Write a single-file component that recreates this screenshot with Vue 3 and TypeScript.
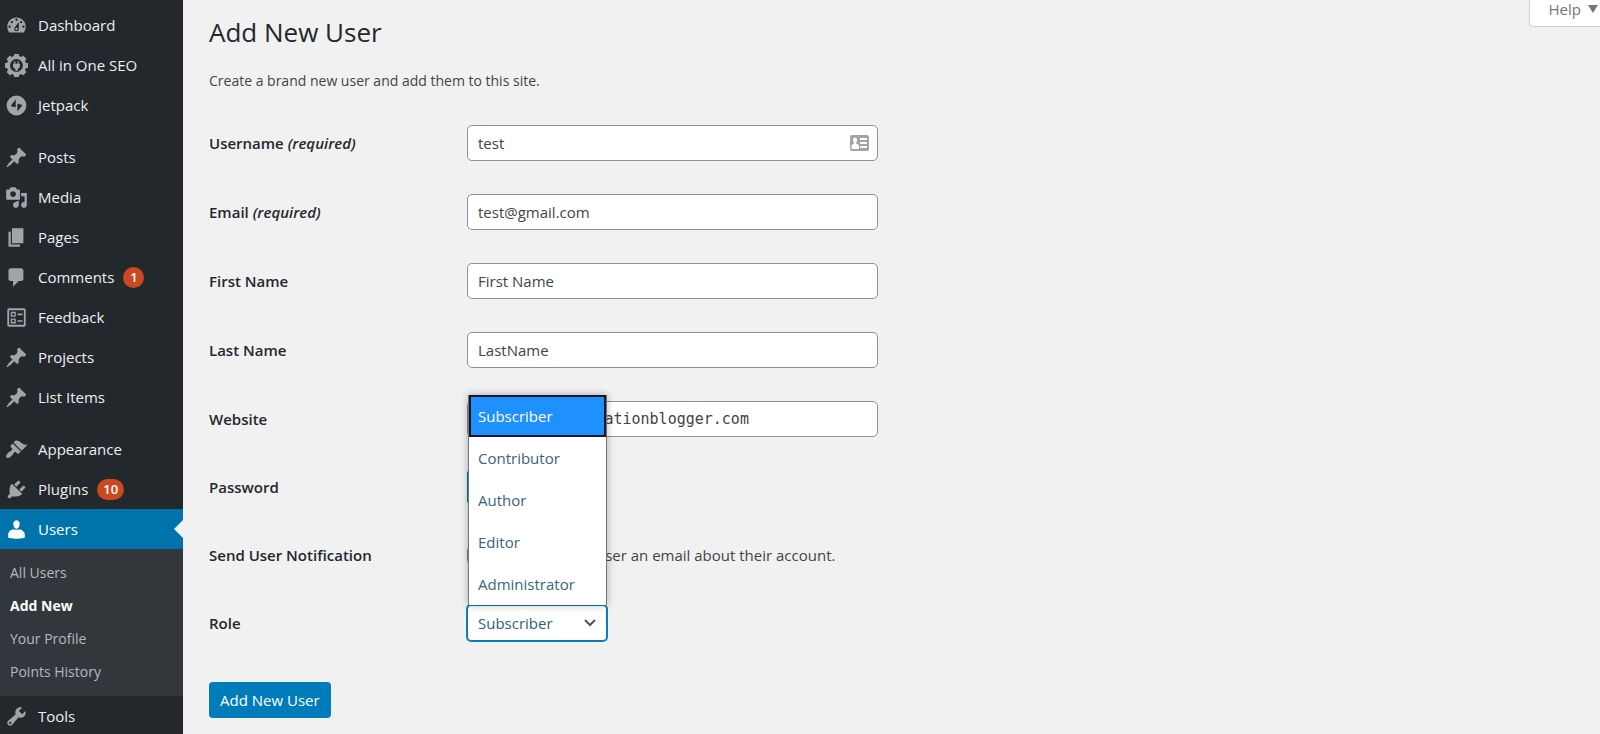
<script setup lang="ts">
import { ref } from 'vue'

interface MenuItem {
  label: string
  icon: string
  badge?: number
  current?: boolean
  children?: string[]
}

interface Field {
  id: string
  label: string
  type: string
  required?: boolean
  mono?: boolean
}

const pin =
  'M10.44 3.02l1.82-1.82 6.36 6.35-1.83 1.82c-1.05-.68-2.48-.57-3.41.36l-.75.75c-.92.93-1.04 2.35-.35 3.41l-1.83 1.82-2.41-2.41-2.8 2.79c-.42.42-3.38 2.71-3.8 2.29s1.86-3.39 2.28-3.81l2.79-2.79L4.1 9.36l1.83-1.82c1.05.69 2.48.57 3.4-.36l.75-.75c.93-.92 1.05-2.35.36-3.41z'

/* Outline of an eight-toothed gear centred on 10,10 with a round hole. */
function gearPath(): string {
  const points: string[] = []
  for (let i = 0; i < 8; i++) {
    const base = (i * Math.PI) / 4
    const corners: [number, number][] = [
      [8.5, -0.27],
      [10.4, -0.2],
      [10.4, 0.2],
      [8.5, 0.27],
    ]
    for (const [r, offset] of corners) {
      const x = 10 + r * Math.cos(base + offset)
      const y = 10 + r * Math.sin(base + offset)
      points.push(`${x.toFixed(2)} ${y.toFixed(2)}`)
    }
  }
  return `M${points.join('L')}zM10 4.4a5.6 5.6 0 1 0 0 11.2a5.6 5.6 0 1 0 0-11.2z`
}

const icons: Record<string, string> = {
  dashboard:
    'M3.76 16h12.48c1.1-1.37 1.76-3.11 1.76-5 0-4.42-3.58-8-8-8s-8 3.58-8 8c0 1.89.66 3.63 1.76 5zM10 4c.55 0 1 .45 1 1s-.45 1-1 1-1-.45-1-1 .45-1 1-1zM6 6c.55 0 1 .45 1 1s-.45 1-1 1-1-.45-1-1 .45-1 1-1zm8 0c.55 0 1 .45 1 1s-.45 1-1 1-1-.45-1-1 .45-1 1-1zm-5.37 5.55L12 7v6c0 1.1-.9 2-2 2s-2-.9-2-2c0-.57.24-1.08.63-1.45zM4 10c.55 0 1 .45 1 1s-.45 1-1 1-1-.45-1-1 .45-1 1-1zm12 0c.55 0 1 .45 1 1s-.45 1-1 1-1-.45-1-1 .45-1 1-1zm-5 3c0-.55-.45-1-1-1s-1 .45-1 1 .45 1 1 1 1-.45 1-1z',
  seo: gearPath() + 'M8 6.2h1v2.2h2V6.2h1v2.2h1v2.2c0 1.2-.9 2-2 2.1v2.1H9v-2.1c-1.1-.1-2-.9-2-2.1V8.4h1z',
  jetpack:
    'M10 1.4a8.6 8.6 0 1 0 0 17.2a8.6 8.6 0 1 0 0-17.2zM9.3 4.8v6.8L5.5 10.7c-.3-.1-.4-.4-.3-.7zM10.8 8.4l3.8.9c.3.1.4.4.3.7l-4.1 5.3z',
  pin,
  media:
    'M13 11V4c0-.55-.45-1-1-1h-1.67L9 1H5L3.67 3H2c-.55 0-1 .45-1 1v7c0 .55.45 1 1 1h10c.55 0 1-.45 1-1zM7 4.5c1.38 0 2.5 1.12 2.5 2.5S8.38 9.5 7 9.5 4.5 8.38 4.5 7 5.62 4.5 7 4.5zM14 6h5v10.5c0 1.38-1.12 2.5-2.5 2.5S14 17.88 14 16.5s1.12-2.5 2.5-2.5c.17 0 .34.02.5.05V9h-3V6zm-4 8.05V13h2v3.5c0 1.38-1.12 2.5-2.5 2.5S7 17.88 7 16.5 8.12 14 9.5 14c.17 0 .34.02.5.05z',
  pages: 'M6 15V2h10v13H6zm-1 1h8v2H3V5h2v11z',
  comments: 'M5 2h9c1.1 0 2 .9 2 2v7c0 1.1-.9 2-2 2h-2l-5 5v-5H5c-1.1 0-2-.9-2-2V4c0-1.1.9-2 2-2z',
  feedback:
    'M3.5 2h13c.8 0 1.5.7 1.5 1.5v13c0 .8-.7 1.5-1.5 1.5h-13c-.8 0-1.5-.7-1.5-1.5v-13C2 2.7 2.7 2 3.5 2zM3.6 3.6v12.8h12.8V3.6zM5 5h4.4v4.4H5zM6.2 6.2v2h2v-2zM5 10.8h4.4v4.4H5zM6.2 12v2h2v-2zM10.8 6.5h4.4v1.5h-4.4zM10.8 12.3h4.4v1.5h-4.4z',
  appearance:
    'M14.48 11.06L7.41 3.99l1.5-1.5c.5-.56 2.3-.47 3.51.32 1.21.8 1.43 1.28 2.91 2.1 1.18.64 2.45 1.26 4.45.85zm-.71.71L6.7 4.7 4.93 6.47c-.39.39-.39 1.02 0 1.41l1.06 1.06c.39.39.39 1.03 0 1.42-.6.6-1.43 1.11-2.21 1.69-.35.26-.7.53-1.01.84C1.43 14.23.4 16.08 1.4 17.07c.99 1 2.84-.03 4.18-1.36.31-.31.58-.66.85-1.02.57-.78 1.08-1.61 1.69-2.21.39-.39 1.02-.39 1.41 0l1.06 1.06c.39.39 1.02.39 1.41 0z',
  plugins:
    'M13.11 4.36L9.87 7.6 8 5.73l3.24-3.24c.35-.34 1.05-.2 1.56.32.52.51.66 1.21.31 1.55zm-8 1.77l.91-1.12 9.01 9.01-1.19.84c-.71.71-2.63 1.16-3.82 1.16H6.14L4.9 17.26c-.59.59-1.54.59-2.12 0-.59-.58-.59-1.53 0-2.12l1.24-1.24v-3.88c0-1.13.4-3.19 1.09-3.89zm7.26 3.97l3.24-3.24c.34-.35 1.04-.21 1.55.31.52.51.66 1.21.31 1.55l-3.24 3.25z',
  users:
    'M10 9.25c-2.27 0-2.73-3.44-2.73-3.44C7 4.02 7.82 2 9.97 2c2.16 0 2.98 2.02 2.71 3.81 0 0-.41 3.44-2.68 3.44zM10 10.2L12.72 10c2.39 0 4.52 2.33 4.52 4.53v2.49s-3.65 1.13-7.24 1.13c-3.65 0-7.24-1.13-7.24-1.13v-2.49c0-2.25 1.94-4.48 4.47-4.48z',
  tools:
    'M16.68 9.77c-1.34 1.34-3.3 1.67-4.95.99l-5.41 6.52c-.99.99-2.59.99-3.58 0s-.99-2.59 0-3.57l6.52-5.42c-.68-1.65-.35-3.61.99-4.95 1.28-1.28 3.12-1.62 4.72-1.06l-2.89 2.89 2.82 2.82 2.86-2.87c.53 1.58.18 3.39-1.08 4.65zM3.81 16.21c.4.39 1.04.39 1.43 0 .4-.4.4-1.04 0-1.43-.39-.4-1.03-.4-1.43 0-.39.39-.39 1.03 0 1.43z',
}

const menuGroups: MenuItem[][] = [
  [
    { label: 'Dashboard', icon: 'dashboard' },
    { label: 'All in One SEO', icon: 'seo' },
    { label: 'Jetpack', icon: 'jetpack' },
  ],
  [
    { label: 'Posts', icon: 'pin' },
    { label: 'Media', icon: 'media' },
    { label: 'Pages', icon: 'pages' },
    { label: 'Comments', icon: 'comments', badge: 1 },
    { label: 'Feedback', icon: 'feedback' },
    { label: 'Projects', icon: 'pin' },
    { label: 'List Items', icon: 'pin' },
  ],
  [
    { label: 'Appearance', icon: 'appearance' },
    { label: 'Plugins', icon: 'plugins', badge: 10 },
    {
      label: 'Users',
      icon: 'users',
      current: true,
      children: ['All Users', 'Add New', 'Your Profile', 'Points History'],
    },
    { label: 'Tools', icon: 'tools' },
  ],
]

const currentChild = 'Add New'

const fields: Field[] = [
  { id: 'username', label: 'Username', type: 'text', required: true },
  { id: 'email', label: 'Email', type: 'email', required: true },
  { id: 'first-name', label: 'First Name', type: 'text' },
  { id: 'last-name', label: 'Last Name', type: 'text' },
  { id: 'website', label: 'Website', type: 'url', mono: true },
]

const values = ref<Record<string, string>>({
  username: 'test',
  email: 'test@gmail.com',
  'first-name': 'First Name',
  'last-name': 'LastName',
  website: 'https://informationblogger.com',
})

const roles = ['Subscriber', 'Contributor', 'Author', 'Editor', 'Administrator']
const role = ref('Subscriber')
const roleListOpen = ref(true)
const notify = ref(false)

function pickRole(name: string): void {
  role.value = name
  roleListOpen.value = false
}
</script>

<template>
  <div class="admin">
    <nav class="sidebar" aria-label="Main menu">
      <ul v-for="(group, g) in menuGroups" :key="g" class="menu-group">
        <li v-for="item in group" :key="item.label">
          <a href="#" class="menu-link" :class="{ current: item.current }">
            <svg class="menu-icon" viewBox="0 0 20 20" aria-hidden="true">
              <path :d="icons[item.icon]" fill-rule="evenodd" />
            </svg>
            <span>{{ item.label }}</span>
            <span v-if="item.badge" class="badge">{{ item.badge }}</span>
          </a>
          <ul v-if="item.children" class="submenu">
            <li v-for="child in item.children" :key="child">
              <a href="#" class="submenu-link" :class="{ active: child === currentChild }">{{ child }}</a>
            </li>
          </ul>
        </li>
      </ul>
    </nav>

    <main class="content">
      <header class="page-head">
        <h1>Add New User</h1>
        <button type="button" class="help">
          Help
          <svg viewBox="0 0 10 8" aria-hidden="true"><path d="M0 0h10L5 8z" /></svg>
        </button>
      </header>
      <p class="intro">Create a brand new user and add them to this site.</p>

      <form @submit.prevent>
        <div v-for="field in fields" :key="field.id" class="row">
          <label :for="field.id">{{ field.label }} <em v-if="field.required">(required)</em></label>
          <div class="control">
            <input
              :id="field.id"
              v-model="values[field.id]"
              :type="field.type"
              class="text-input"
              :class="{ mono: field.mono }"
            />
            <svg v-if="field.id === 'username'" class="card-icon" viewBox="0 0 19 16" aria-hidden="true">
              <rect width="19" height="16" rx="2" fill="#a3a3a3" />
              <path
                d="M5 2.5c1.3 0 2.1 1 2.1 2.4 0 1-.4 1.9-1 2.4v1.2l2 1c.5.3.8.8.8 1.5v3H1.5v-3c0-.7.3-1.2.8-1.5l1.7-1V7.3c-.6-.5-1-1.4-1-2.4 0-1.4.8-2.4 2-2.4zM10 3h7v2h-7zM10 7h7v2h-7zM10 11h7v2h-7z"
                fill="#fff"
              />
            </svg>
          </div>
        </div>

        <div class="row compact">
          <label for="show-password">Password</label>
          <div class="control">
            <button id="show-password" type="button" class="secondary">Show password</button>
          </div>
        </div>

        <div class="row compact">
          <span class="row-title">Send User Notification</span>
          <div class="control">
            <label class="check">
              <input v-model="notify" type="checkbox" />
              <span>Send the new user an email about their account.</span>
            </label>
          </div>
        </div>

        <div class="row compact">
          <label for="role">Role</label>
          <div class="control">
            <div class="role">
              <select id="role" v-model="role">
                <option v-for="name in roles" :key="name">{{ name }}</option>
              </select>
              <svg class="chevron" viewBox="0 0 12 8" aria-hidden="true">
                <path d="M1 1l5 5 5-5" fill="none" stroke="#555" stroke-width="2" />
              </svg>
              <ul v-if="roleListOpen" class="role-list" role="listbox" aria-label="Role">
                <li
                  v-for="name in roles"
                  :key="name"
                  role="option"
                  :aria-selected="name === role"
                  :class="{ selected: name === role }"
                  @click="pickRole(name)"
                >
                  {{ name }}
                </li>
              </ul>
            </div>
          </div>
        </div>

        <button type="submit" class="primary">Add New User</button>
      </form>
    </main>
  </div>
</template>

<style>
body {
  margin: 0;
  background: #f1f1f1;
}
</style>

<style scoped>
.admin {
  display: flex;
  height: 100vh;
  overflow: hidden;
  background: #f1f1f1;
  color: #444;
  font-family: "Open Sans", "Noto Sans", sans-serif;
  font-size: 15px;
  line-height: 24px;
}

.admin * {
  box-sizing: border-box;
}

ul {
  margin: 0;
  padding: 0;
  list-style: none;
}

button,
input,
select {
  font: inherit;
}

/* Sidebar */
.sidebar {
  flex: 0 0 183px;
  padding-top: 5px;
  overflow: hidden;
  background: #23282d;
}

.menu-group + .menu-group {
  margin-top: 12px;
}

.menu-link {
  position: relative;
  display: flex;
  align-items: center;
  height: 40px;
  padding-left: 5px;
  color: #eee;
  text-decoration: none;
}

.menu-icon {
  flex: none;
  width: 23px;
  height: 23px;
  margin-right: 10px;
  fill: #a0a5aa;
}

.menu-link.current {
  background: #0073aa;
  color: #fff;
}

.menu-link.current .menu-icon {
  fill: #fff;
}

.menu-link.current::after {
  content: "";
  position: absolute;
  top: 11px;
  right: 0;
  border: 9px solid transparent;
  border-left-width: 0;
  border-right-color: #f1f1f1;
}

.badge {
  min-width: 21px;
  margin-left: 9px;
  padding: 0 6px;
  border-radius: 11px;
  background: #ca4a1f;
  color: #fff;
  font-size: 13px;
  font-weight: 600;
  line-height: 21px;
  text-align: center;
}

.submenu {
  padding: 7px 0 8px;
  background: #32373c;
}

.submenu-link {
  display: block;
  padding-left: 10px;
  color: #b4b9be;
  font-size: 14px;
  line-height: 33px;
  text-decoration: none;
}

.submenu-link.active {
  color: #fff;
  font-weight: 700;
}

/* Page */
.content {
  flex: 1;
  min-width: 0;
  padding-left: 26px;
}

.page-head {
  display: flex;
  align-items: flex-start;
  justify-content: space-between;
}

h1 {
  margin: 0;
  padding-top: 16px;
  color: #23282d;
  font-size: 26px;
  font-weight: 400;
  line-height: 32px;
}

.help {
  display: flex;
  align-items: center;
  gap: 7px;
  height: 27px;
  padding: 0 2px 8px 19px;
  border: 1px solid #ccd0d4;
  border-width: 0 0 1px 1px;
  border-radius: 0 0 0 4px;
  background: #fff;
  color: #72777c;
  line-height: 19px;
}

.help svg {
  width: 10px;
  height: 8px;
  fill: #72777c;
}

.intro {
  margin: 20px 0 0;
  font-size: 14px;
  line-height: 26px;
}

form {
  padding-top: 14px;
}

.row {
  display: grid;
  grid-template-columns: 258px 1fr;
  align-items: center;
  height: 69px;
}

.row.compact {
  height: 68px;
}

.row > label,
.row-title {
  color: #23282d;
  font-weight: 600;
}

.control {
  position: relative;
  width: 100%;
  max-width: 411px;
}

.text-input {
  display: block;
  width: 100%;
  height: 36px;
  padding: 0 10px;
  border: 1px solid #8d9297;
  border-radius: 5px;
  background: #fff;
  color: #444;
}

.text-input.mono {
  font-family: "DejaVu Sans Mono", monospace;
}

.card-icon {
  position: absolute;
  top: 10px;
  right: 9px;
  width: 19px;
  height: 16px;
}

.secondary {
  width: 138px;
  height: 34px;
  padding: 0;
  border: 1px solid #0071a1;
  border-radius: 3px;
  background: #f3f5f6;
  color: #0071a1;
}

.check {
  display: flex;
  align-items: center;
  gap: 12px;
  white-space: nowrap;
}

.check input {
  appearance: none;
  width: 18px;
  height: 18px;
  margin: 0;
  border: 1px solid #7e8993;
  border-radius: 4px;
  background: #fff;
}

.role {
  position: relative;
  width: 140px;
}

.role select {
  display: block;
  width: 100%;
  height: 36px;
  padding: 0 30px 0 10px;
  appearance: none;
  border: 1px solid #007cba;
  border-radius: 4px;
  outline: none;
  box-shadow: 0 0 0 1px #1381b3;
  background: #fff;
  color: #2f5f78;
}

.chevron {
  position: absolute;
  top: 14px;
  right: 11px;
  width: 12px;
  height: 8px;
  pointer-events: none;
}

.role-list {
  position: absolute;
  right: 0;
  bottom: 100%;
  left: 1px;
  z-index: 1;
  border: 1px solid #767676;
  border-width: 0 1px;
  background: #fff;
  box-shadow: 0 0 8px rgba(0, 0, 0, 0.3);
  color: #3b647a;
}

.role-list li {
  padding-left: 9px;
  line-height: 42px;
}

.role-list li.selected {
  background: #1e90ff;
  box-shadow: inset 0 0 0 2px #101828;
  color: #fff;
}

.primary {
  height: 36px;
  margin-top: 25px;
  padding: 0 11px;
  border: 0;
  border-radius: 4px;
  background: #007cba;
  color: #fff;
}
</style>
